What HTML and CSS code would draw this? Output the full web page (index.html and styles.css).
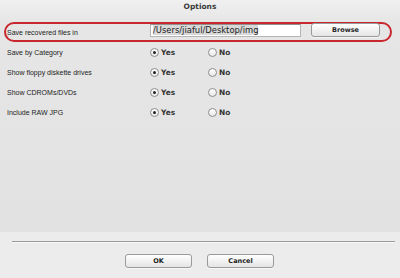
FILE: index.html
```html
<!DOCTYPE html>
<html lang="en">
<head>
  <meta charset="UTF-8">
  <meta name="viewport" content="width=device-width, initial-scale=1.0">
  <title>Options</title>
  <link rel="stylesheet" href="styles.css">
</head>
<body>

  <div class="dialog">
    <div class="title">Options</div>

    <div class="options">
      <div class="row highlight">
        <div class="label">Save recovered files in</div>
        <div class="path"><span class="selected">/Users/jiaful/Desktop/img</span></div>
        <button class="btn browse">Browse</button>
      </div>

      <div class="row">
        <div class="label">Save by Category</div>
        <label class="radio"><span class="dot on"></span>Yes</label>
        <label class="radio"><span class="dot"></span>No</label>
      </div>

      <div class="row">
        <div class="label">Show floppy diskette drives</div>
        <label class="radio"><span class="dot on"></span>Yes</label>
        <label class="radio"><span class="dot"></span>No</label>
      </div>

      <div class="row">
        <div class="label">Show CDROMs/DVDs</div>
        <label class="radio"><span class="dot on"></span>Yes</label>
        <label class="radio"><span class="dot"></span>No</label>
      </div>

      <div class="row">
        <div class="label">Include RAW JPG</div>
        <label class="radio"><span class="dot on"></span>Yes</label>
        <label class="radio"><span class="dot"></span>No</label>
      </div>
    </div>

    <div class="footer">
      <div class="separator"></div>
      <div class="buttons">
        <button class="btn">OK</button>
        <button class="btn">Cancel</button>
      </div>
    </div>
  </div>

</body>
</html>
```

FILE: styles.css
```css
* {
  margin: 0;
  padding: 0;
  box-sizing: border-box;
  font-family: "DejaVu Sans", Arial, sans-serif;
}

body {
  width: 400px;
  height: 278px;
  overflow: hidden;
  background-color: #e4e4e4;
}

.dialog {
  display: flex;
  flex-direction: column;
  height: 100%;
  background: linear-gradient(#f0f0f0 0px, #e6e6e6 22px, #e2e2e2 232px);
}

.title {
  height: 22px;
  padding-top: 2px;
  text-align: center;
  font-size: 7.5px;
  font-weight: bold;
  color: #3a3a3a;
}

.options {
  display: flex;
  flex-direction: column;
  flex-grow: 1;
}

.row {
  display: flex;
  align-items: center;
  height: 20px;
  padding-left: 7px;
  color: #222;
}

.row .label {
  width: 143px;
  font-family: "Liberation Sans", Arial, sans-serif;
  font-size: 7px;
}

.row.highlight {
  margin-left: 4px;
  width: 388px;
  padding-left: 1px;
  border: 2px solid #c9272e;
  border-radius: 10px;
}

.path {
  width: 151px;
  height: 13px;
  margin-top: -4px;
  padding: 0 2px;
  background-color: #fff;
  border: 1px solid #b5b5b5;
  border-top-color: #909090;
  font-size: 8.4px;
  line-height: 11px;
  color: #222;
}

.path .selected {
  background-color: #d8d8d8;
}

.btn {
  height: 14px;
  border: 1px solid #9a9a9a;
  border-radius: 3px;
  background: linear-gradient(#ffffff, #f2f2f2 50%, #e4e4e4);
  font-size: 6.5px;
  font-weight: bold;
  color: #222;
  box-shadow: 0 1px 0 rgba(255, 255, 255, 0.6);
}

.browse {
  width: 69px;
  margin-left: 10px;
  margin-top: -4px;
}

.radio {
  display: flex;
  align-items: center;
  width: 58px;
  font-size: 7.4px;
  font-weight: bold;
  color: #333;
}

.dot {
  width: 9px;
  height: 9px;
  margin-right: 2px;
  border: 1px solid #8e8e8e;
  border-radius: 50%;
  background: linear-gradient(#ffffff, #e8e8e8);
  display: flex;
  align-items: center;
  justify-content: center;
}

.dot.on::after {
  content: "";
  width: 3px;
  height: 3px;
  border-radius: 50%;
  background-color: #222;
}

.footer {
  height: 46px;
  background-color: #ececec;
  padding-top: 9px;
}

.separator {
  margin: 0 5px 0 12px;
  height: 2px;
  border-top: 1px solid #9a9a9a;
  border-bottom: 1px solid #f8f8f8;
}

.buttons {
  display: flex;
  justify-content: center;
  gap: 15px;
  margin-top: 11px;
  padding-right: 1px;
}

.buttons .btn {
  width: 67px;
}
```
